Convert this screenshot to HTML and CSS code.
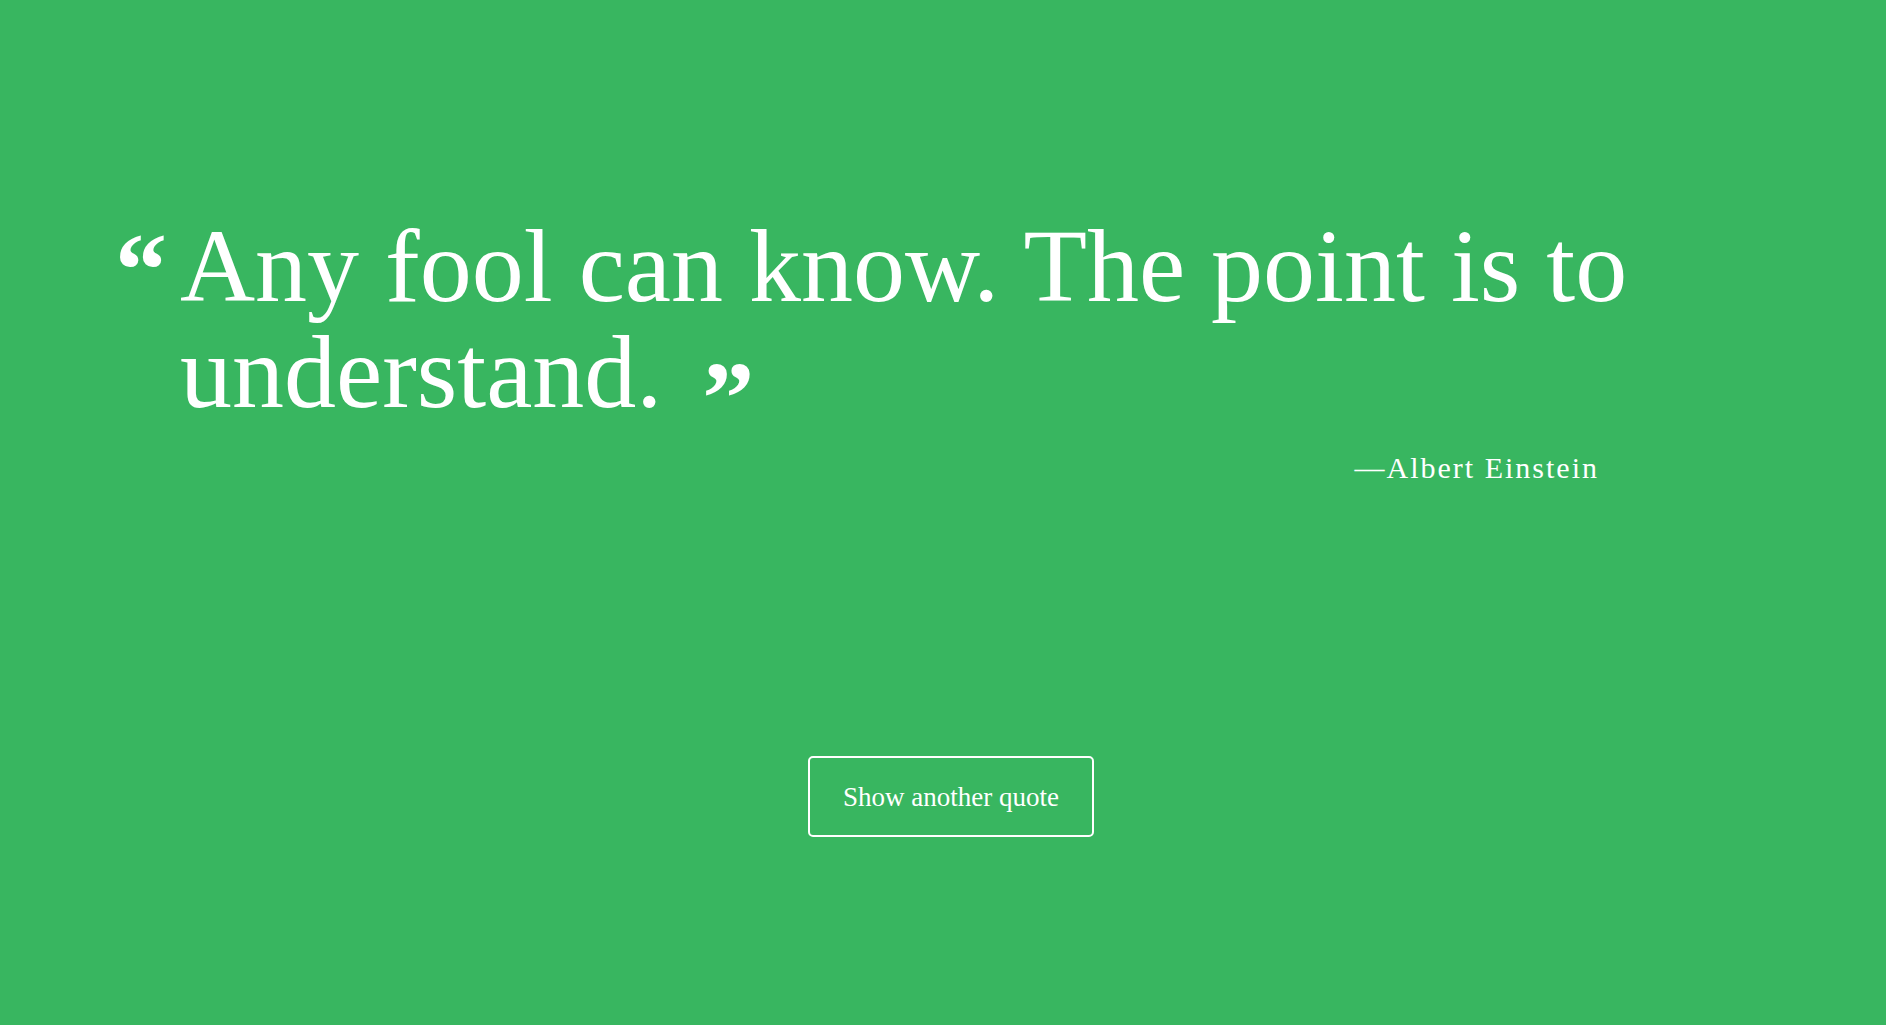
FILE: index.html
```html
<!DOCTYPE html>
<html lang="en">
<head>
<meta charset="utf-8">
<title>Random Quote</title>
<link rel="stylesheet" href="styles.css">
</head>
<body>
<main class="page">
  <section class="quote-box">
    <blockquote class="quote">
      <span class="quote-open">“</span>
      <p class="quote-text">Any fool can know. The point is to understand.<span class="quote-close">”</span></p>
    </blockquote>
    <p class="author">—Albert Einstein</p>
  </section>
  <div class="actions">
    <button class="btn-new" type="button">Show another quote</button>
  </div>
</main>
</body>
</html>
```

FILE: styles.css
```css
html, body {
  margin: 0;
  padding: 0;
}

body {
  background: #38b660;
  color: #ffffff;
  font-family: "Liberation Serif", "Times New Roman", serif;
  min-height: 1025px;
}

.page {
  display: flex;
  flex-direction: column;
  padding-top: 213px;
}

.quote-box {
  display: flex;
  flex-direction: column;
}

.quote {
  display: flex;
  align-items: flex-start;
  margin: 0;
  padding-left: 115px;
}

.quote-open {
  flex: 0 0 65px;
  font-size: 104px;
  line-height: 106px;
  font-weight: bold;
  margin-top: 4px;
}

.quote-text {
  margin: 0;
  max-width: 1500px;
  font-size: 104px;
  line-height: 106px;
  font-weight: normal;
}

.quote-close {
  display: inline-block;
  font-size: 104px;
  font-weight: bold;
  margin-left: 40px;
  vertical-align: -26px;
  line-height: 0;
}

.author {
  margin: 26px 0 0 0;
  padding-right: 287px;
  text-align: right;
  font-size: 30px;
  letter-spacing: 2px;
}

.actions {
  display: flex;
  justify-content: center;
  padding-left: 16px;
  margin-top: 271px;
}

.btn-new {
  background: transparent;
  color: #ffffff;
  border: 2px solid #ffffff;
  border-radius: 5px;
  font-family: "Liberation Serif", "Times New Roman", serif;
  font-size: 27px;
  line-height: normal;
  padding: 24px 33px 22px 33px;
  width: 286px;
  height: 81px;
  box-sizing: border-box;
  cursor: pointer;
}
```
